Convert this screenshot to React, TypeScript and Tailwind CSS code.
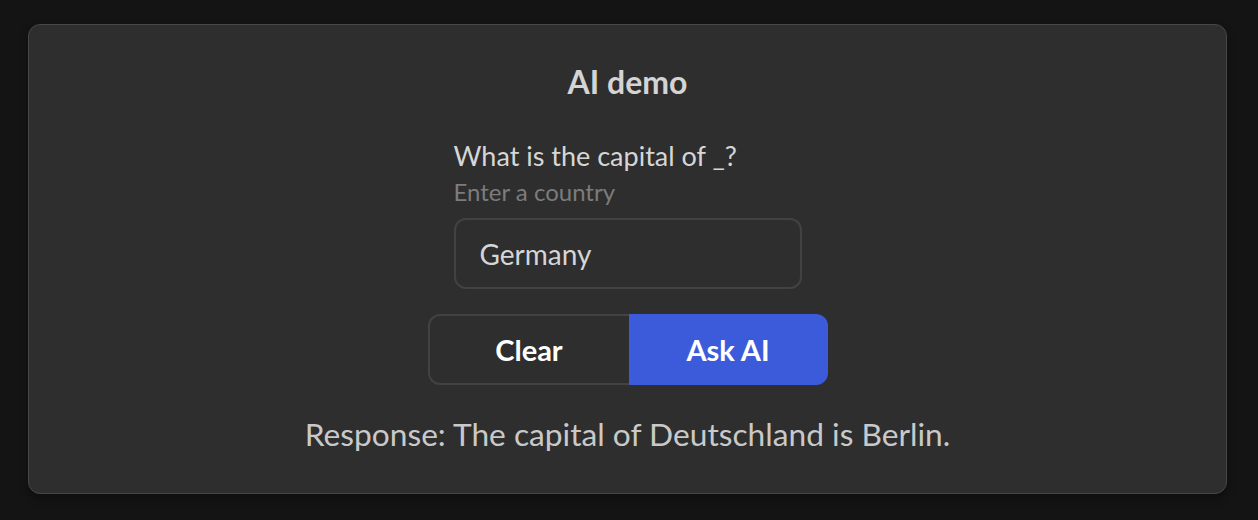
import React from "react";

export default function App() {
  return (
    <div className="min-h-[520px] w-full bg-[#141414] pt-[24px] pl-[28px]" style={{ fontFamily: "Lato, 'Noto Sans', sans-serif" }}>
      <div className="w-[1199px] h-[470px] rounded-[12px] border border-[#474747] bg-[#2e2e2e] shadow-[0_4px_8px_rgba(0,0,0,0.35)] flex flex-col items-center pt-[37px]">
        <h1 className="text-[32px] leading-[40px] font-bold text-[#d4d4d4]">AI demo</h1>
        <div className="mt-[38px] w-[348px] flex flex-col">
          <label className="text-[27px] leading-[32px] text-[#d6d6d6] whitespace-nowrap">What is the capital of _?</label>
          <span className="text-[24px] leading-[28px] text-[#7c7c7c] mt-[6px]">Enter a country</span>
          <div className="mt-[12px] h-[71px] rounded-[12px] border-2 border-[#424242] flex items-center px-[24px]">
            <span className="text-[28px] text-[#d6d6d6]">Germany</span>
          </div>
        </div>
        <div className="mt-[25px] flex w-[400px] h-[71px]">
          <button className="flex-1 rounded-l-[12px] border-2 border-r-0 border-[#424242] text-[29px] font-bold text-white">Clear</button>
          <button className="flex-1 rounded-r-[12px] bg-[#3b5bdb] text-[29px] font-bold text-white">Ask AI</button>
        </div>
        <p className="mt-[29px] text-[31.7px] leading-[40px] text-[#c9c9c9] whitespace-nowrap">Response: The capital of Deutschland is Berlin.</p>
      </div>
    </div>
  );
}
